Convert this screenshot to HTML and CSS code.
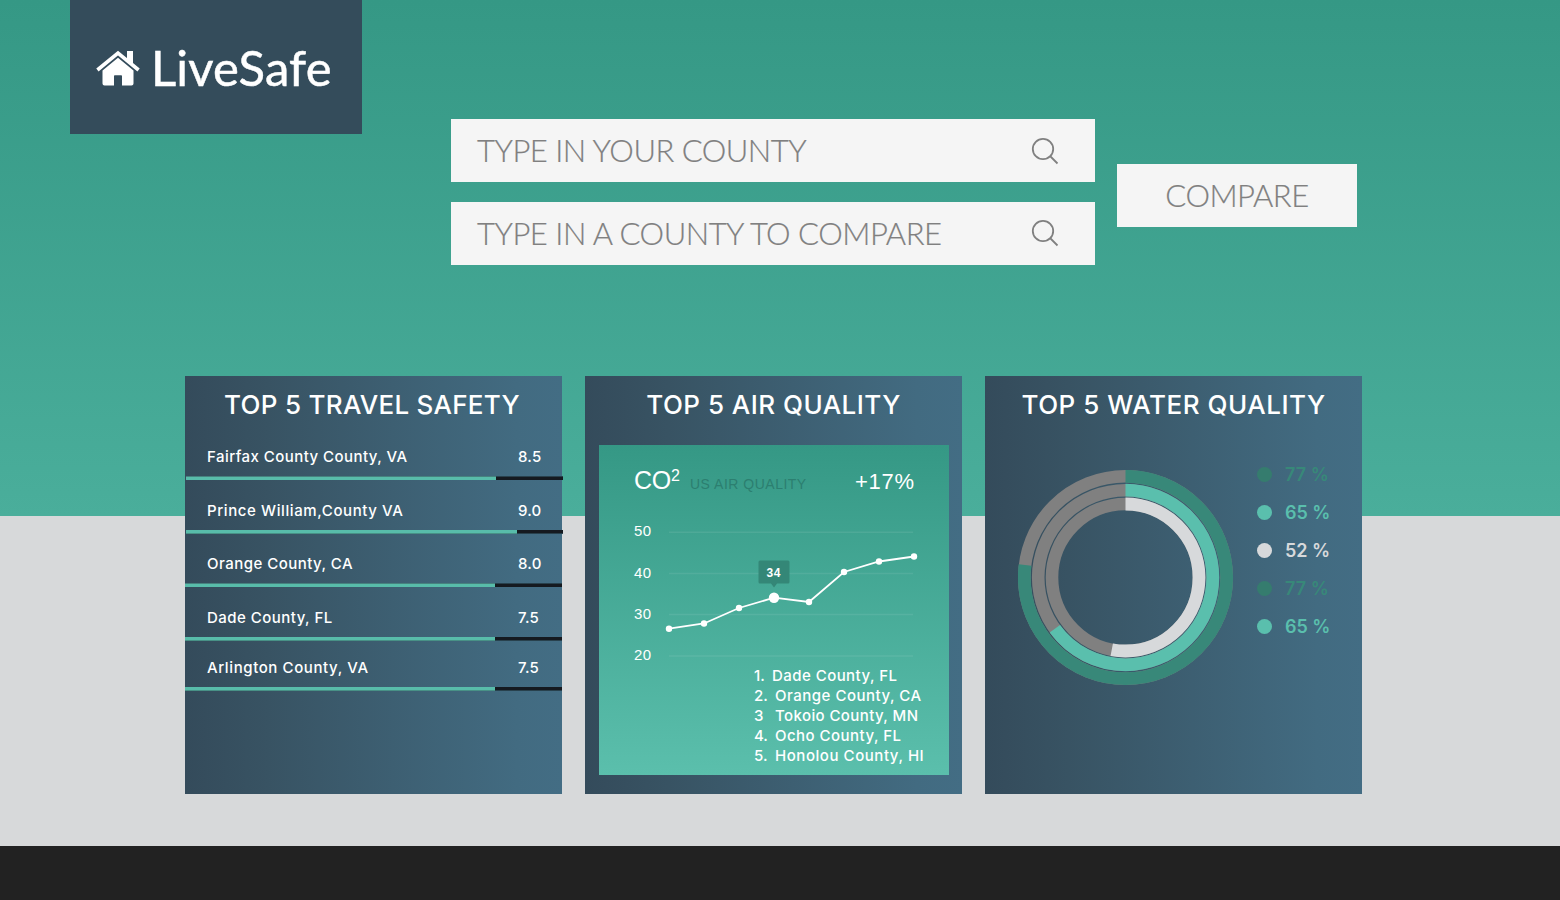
FILE: index.html
```html
<!DOCTYPE html>
<html lang="en">
<head>
<meta charset="utf-8">
<title>LiveSafe</title>
<link rel="stylesheet" href="styles.css">
</head>
<body>
<div class="page">
  <header class="header">
    <a class="logo">
      <svg class="logo-icon" width="44" height="36" viewBox="0 0 44 36">
        <path d="M1.400 20 L22 3 L42.600 20" fill="none" stroke="#fff" stroke-width="3.600"/>
        <path d="M31 1h6v14L31 10z" fill="#fff"/>
        <path d="M22 7.800 L37.500 20.500V33.400q0 2-2 2H26V26q0-.8-.8-.8h-6.400q-.8 0-.8.8v9.400H8.500q-2 0-2-2V20.500z" fill="#fff"/>
      </svg>
      <span class="logo-name">LiveSafe</span>
    </a>
    <form class="search">
      <div class="fields">
        <label class="field"><span class="hint hint-first">TYPE IN YOUR COUNTY</span>
          <svg class="lens" width="28" height="28" viewBox="0 0 28 28"><circle cx="12" cy="12" r="10.200"/><path d="M19 19l7.500 7.500"/></svg>
        </label>
        <label class="field field-second"><span class="hint">TYPE IN A COUNTY TO COMPARE</span>
          <svg class="lens" width="28" height="28" viewBox="0 0 28 28"><circle cx="12" cy="12" r="10.200"/><path d="M19 19l7.500 7.500"/></svg>
        </label>
      </div>
      <button class="compare" type="button">COMPARE</button>
    </form>
  </header>

  <main class="cards">
    <section class="card">
      <h2 class="title title-travel">TOP 5 TRAVEL SAFETY</h2>
      <div class="row row-1"><span class="county c1">Fairfax County County, VA</span><span class="score">8.5</span></div>
      <div class="bar bar-shift soft-top"><div class="fill" style="width:310px"></div></div>
      <div class="row row-2"><span class="county c2">Prince William,County VA</span><span class="score">9.0</span></div>
      <div class="bar bar-shift"><div class="fill" style="width:331px"></div></div>
      <div class="row row-3"><span class="county c3">Orange County, CA</span><span class="score">8.0</span></div>
      <div class="bar soft-top"><div class="fill" style="width:310px"></div></div>
      <div class="row row-4"><span class="county c4">Dade County, FL</span><span class="score">7.5</span></div>
      <div class="bar"><div class="fill" style="width:310px"></div></div>
      <div class="row row-5"><span class="county c5">Arlington County, VA</span><span class="score">7.5</span></div>
      <div class="bar"><div class="fill" style="width:310px"></div></div>
    </section>

    <section class="card">
      <h2 class="title title-air">TOP 5 AIR QUALITY</h2>
      <div class="panel">
        <div class="panel-head">
          <span class="gas">CO<sup class="power">2</sup></span>
          <span class="caption">US AIR QUALITY</span>
          <span class="change">+17%</span>
        </div>
        <svg class="chart" width="350" height="155" viewBox="0 65 350 155">
          <g stroke="#fff" stroke-opacity=".08" stroke-width="1.400">
            <path d="M70 87.300H314M70 128.500H314M70 169.500H314M70 211H314"/>
          </g>
          <g class="axis">
            <text x="35" y="91" textLength="17">50</text>
            <text x="35" y="133" textLength="17">40</text>
            <text x="35" y="174" textLength="17">30</text>
            <text x="35" y="215" textLength="17">20</text>
          </g>
          <path d="M161 115.500h28q1.500 0 1.500 1.500v20q0 1.500-1.500 1.500h-11l-3 4-3-4h-11q-1.500 0-1.500-1.500v-20q0-1.500 1.500-1.500z" fill="#348777"/>
          <text class="tip" x="167.500" y="132" textLength="14">34</text>
          <polyline points="70,183.700 105,178.500 140,163 175,152.700 210,157 245,127 280,116.500 315,111.500" fill="none" stroke="#fff" stroke-width="1.800"/>
          <g fill="#fff">
            <circle cx="70" cy="183.700" r="3.200"/><circle cx="105" cy="178.500" r="3.200"/><circle cx="140" cy="163" r="3.200"/><circle cx="175" cy="152.700" r="5.200"/><circle cx="210" cy="157" r="3.200"/><circle cx="245" cy="127" r="3.200"/><circle cx="280" cy="116.500" r="3.200"/><circle cx="315" cy="111.500" r="3.200"/>
          </g>
        </svg>
        <ol class="ranking">
          <li><span class="num num-first">1.</span><span class="r1">Dade County, FL</span></li>
          <li><span class="num">2.</span><span class="r2">Orange County, CA</span></li>
          <li><span class="num">3</span><span class="r3">Tokoio County, MN</span></li>
          <li><span class="num">4.</span><span class="r4">Ocho County, FL</span></li>
          <li><span class="num">5.</span><span class="r5">Honolou County, HI</span></li>
        </ol>
      </div>
    </section>

    <section class="card">
      <h2 class="title title-water">TOP 5 WATER QUALITY</h2>
      <div class="water">
        <svg class="rings" width="216" height="216" viewBox="-107.500 -107.500 216 216">
          <g fill="none" transform="rotate(-90)">
            <g stroke="#808080"><circle r="101.200" stroke-width="12.600"/><circle r="87.300" stroke-width="12.600"/><circle r="73.500" stroke-width="12.600"/></g>
            <circle r="101.200" stroke="#388879" stroke-width="12.800" pathLength="100" stroke-dasharray="77 23"/>
            <circle r="87.300" stroke="#5abfad" stroke-width="12.800" pathLength="100" stroke-dasharray="65 35"/>
            <circle r="73.500" stroke="#d7d9db" stroke-width="12.800" pathLength="100" stroke-dasharray="53 47"/>
          </g>
        </svg>
        <ul class="legend">
          <li class="deep"><i class="dot"></i>77 %</li>
          <li class="mint"><i class="dot"></i>65 %</li>
          <li class="pale"><i class="dot"></i>52 %</li>
          <li class="deep"><i class="dot"></i>77 %</li>
          <li class="mint"><i class="dot"></i>65 %</li>
        </ul>
      </div>
    </section>
  </main>
  <footer class="footer"></footer>
</div>
</body>
</html>
```
FILE: styles.css
```css
* { box-sizing: border-box; }
body { margin: 0; background: #222; }
.page {
  width: 1560px; height: 900px; overflow: hidden;
  display: flex; flex-direction: column;
  background: linear-gradient(#359885, #4aae9b) 0 0 / 100% 516px no-repeat, #d7d9da;
  font-family: Inter, "Liberation Sans", sans-serif; color: #fff;
}
.header { height: 376px; flex: none; display: flex; align-items: flex-start; padding-left: 70px; }
.logo { width: 292px; height: 134px; background: #344c5b; display: flex; align-items: center; padding-left: 26px; }
.logo-icon { margin-top: 2px; }
.logo-name { font: 400 49px/60px Lato, sans-serif; margin: -1px 0 0 11px; letter-spacing: .2px; -webkit-text-stroke: .5px #fff; }
.search { display: flex; align-items: center; gap: 22px; margin: 119px 0 0 89px; height: 146px; }
.fields { display: flex; flex-direction: column; gap: 20px; }
.field { width: 644px; height: 63px; background: #f5f5f5; display: flex; align-items: center; justify-content: space-between; padding: 0 36px 0 26px; }
.field-second { padding-bottom: 2px; }
.hint, .compare { font: 300 31px/40px Lato, sans-serif; color: #808080; white-space: nowrap; letter-spacing: -.48px; -webkit-text-stroke: .2px #808080; }
.hint-first { letter-spacing: -.5px; margin-bottom: 1px; }
.lens { fill: none; stroke: #808080; stroke-width: 1.8; }
.compare { width: 240px; height: 63px; margin-top: 7px; padding: 0 0 2px; background: #f5f5f5; border: 0; }

.cards { display: flex; gap: 23px; padding-left: 185px; height: 418px; flex: none; }
.card { width: 377px; background: linear-gradient(90deg, #344b5b, #385363 22%, #426b81 88%, #436d84); }
.title { margin: 0; height: 58px; text-align: center; font-weight: 500; font-size: 26px; line-height: 58px; white-space: nowrap; padding-right: 3px; letter-spacing: .28px; }
.title-air { letter-spacing: .47px; padding-right: 0; }
.title-water { letter-spacing: .52px; padding-right: 0; }
.row { display: flex; justify-content: space-between; align-items: flex-end; padding: 0 21px 9px 22px; height: 50px; font-size: 15px; line-height: 20px; font-weight: 500; white-space: nowrap; }
.row-1 { height: 42px; }
.row-3 { height: 49px; }
.row-5 { height: 46px; }
.c1 { letter-spacing: .45px; }
.c2 { letter-spacing: .6px; }
.c3, .c4 { letter-spacing: .47px; }
.c5 { letter-spacing: .6px; }
.score { width: 23px; letter-spacing: .2px; }
.bar { width: 377px; height: 4px; background: linear-gradient(#151a20 3px, #28414d 3px); }
.bar-shift { margin-left: 1px; }
.fill { height: 4px; background: linear-gradient(#58bcaa 3px, #489186 3px); }
.soft-top { background: linear-gradient(#28414d 1px, #151a20 1px); }
.soft-top .fill { background: linear-gradient(#47827f 1px, #58bcaa 1px); }

.panel { margin: 11px 13px 0 14px; height: 330px; background: linear-gradient(#359885, #5bbfac); display: flex; flex-direction: column; }
.panel-head { height: 65px; display: flex; align-items: baseline; padding: 19px 35px 0 35px; font: 25px/32px "Liberation Sans", sans-serif; white-space: nowrap; }
.gas { width: 56px; letter-spacing: -.3px; }
.power { font-size: 16px; line-height: 0; vertical-align: 8px; }
.caption { font-size: 14px; color: #2c7f70; letter-spacing: .5px; }
.change { margin-left: auto; font-size: 22px; letter-spacing: .8px; margin-right: -1px; }
.chart { display: block; flex: none; }
.axis, .tip { fill: #fff; font-family: "Liberation Sans", sans-serif; font-size: 15px; }
.tip { font-size: 12px; font-weight: 700; }
.ranking { list-style: none; margin: 1px 0 0 155px; padding: 0; font-size: 15px; line-height: 20px; font-weight: 500; white-space: nowrap; }
.ranking li { display: flex; }
.num { width: 21px; }
.num-first { width: 18px; }
.r1 { letter-spacing: .45px; }
.r2 { letter-spacing: .5px; }
.r3 { letter-spacing: .4px; }
.r4 { letter-spacing: .47px; }
.r5 { letter-spacing: .55px; }

.water { display: flex; padding: 36px 0 0 33px; }
.rings { margin-top: -.5px; }
.legend { list-style: none; margin: -14.5px 0 0 23px; padding: 0; font-size: 18px; font-weight: 600; }
.legend li { height: 38px; display: flex; align-items: center; }
.dot { width: 15px; height: 15px; border-radius: 50%; background: currentColor; margin-right: 13px; }
.deep { color: #388879; }
.deep .dot { background: #357c6e; }
.mint { color: #5abfad; }
.pale { color: #d7d9db; }
.footer { margin-top: 52px; height: 54px; background: #222; }
```
